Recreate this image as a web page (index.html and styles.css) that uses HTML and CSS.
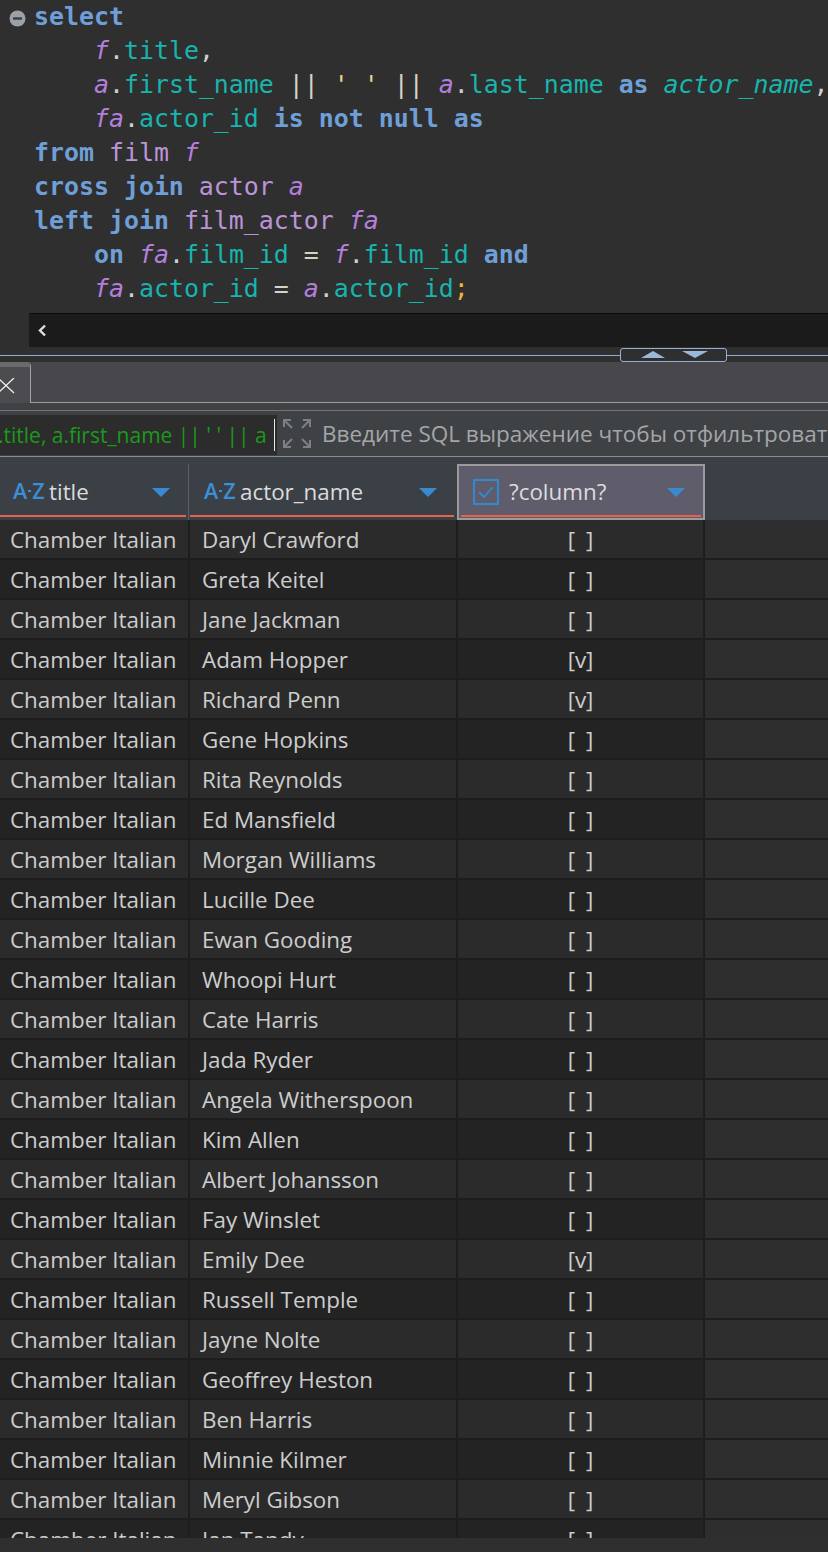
FILE: index.html
```html
<!DOCTYPE html>
<html>
<head>
<meta charset="utf-8">
<title>SQL editor</title>
<link rel="stylesheet" href="styles.css">
</head>
<body>
<div class="editor">
  <div class="code">
    <div class="ln"><span class="fold"><svg width="17" height="17" viewBox="0 0 17 17"><circle cx="8.5" cy="8.5" r="8" fill="#9ca1a8"/><rect x="4" y="7.3" width="9" height="2.4" fill="#3b3d40"/></svg></span><span class="kw">select</span></div>
    <div class="ln">    <span class="al">f</span><span class="pn">.</span><span class="col">title</span><span class="pn">,</span></div>
    <div class="ln">    <span class="al">a</span><span class="pn">.</span><span class="col">first_name</span> <span class="op">||</span> <span class="str">' '</span> <span class="op">||</span> <span class="al">a</span><span class="pn">.</span><span class="col">last_name</span> <span class="kw">as</span> <span class="col it">actor_name</span><span class="pn">,</span></div>
    <div class="ln">    <span class="al">fa</span><span class="pn">.</span><span class="col">actor_id</span> <span class="kw">is not null as</span></div>
    <div class="ln"><span class="kw">from</span> <span class="tb">film</span> <span class="al">f</span></div>
    <div class="ln"><span class="kw">cross join</span> <span class="tb">actor</span> <span class="al">a</span></div>
    <div class="ln"><span class="kw">left join</span> <span class="tb">film_actor</span> <span class="al">fa</span></div>
    <div class="ln">    <span class="kw">on</span> <span class="al">fa</span><span class="pn">.</span><span class="col">film_id</span> <span class="op">=</span> <span class="al">f</span><span class="pn">.</span><span class="col">film_id</span> <span class="kw">and</span></div>
    <div class="ln">    <span class="al">fa</span><span class="pn">.</span><span class="col">actor_id</span> <span class="op">=</span> <span class="al">a</span><span class="pn">.</span><span class="col">actor_id</span><span class="semi">;</span></div>
  </div>
  <div class="hscroll"><svg class="larr" width="11" height="13" viewBox="0 0 11 13"><polyline points="8,1.5 3,6.5 8,11.5" fill="none" stroke="#e0e0e0" stroke-width="2.4"/></svg></div>
</div>

<div class="splitter">
  <div class="split-line"></div>
  <div class="split-box">
    <svg width="26" height="8" viewBox="0 0 26 8"><polygon points="13,0 25,7 1,7" fill="#9ab8da"/></svg>
    <svg width="26" height="8" viewBox="0 0 26 8"><polygon points="0,0 26,0 13,7" fill="#9ab8da"/></svg>
  </div>
  <div class="split-line"></div>
</div>

<div class="tabs">
  <div class="tab"><svg width="18" height="16" viewBox="0 0 18 16"><path d="M-2 0 L14 15 M14 0 L-2 15" stroke="#f0f0f0" stroke-width="1.3" fill="none"/></svg></div>
  <div class="tabs-rest"></div>
</div>
<div class="tab-gap"></div>

<div class="filter">
  <div class="filter-input"><span class="filter-text">.title, a.first_name || ' ' || a</span><span class="caret"></span></div>
  <svg class="expand" width="30" height="31" viewBox="0 0 30 31">
    <g stroke="#7d7f82" stroke-width="2" fill="none">
      <path d="M2 9 V2 H9 M2 2 L10 10"/>
      <path d="M21 2 H28 V9 M28 2 L20 10"/>
      <path d="M2 22 V29 H9 M2 29 L10 21"/>
      <path d="M21 29 H28 V22 M28 29 L20 21"/>
    </g>
  </svg>
  <span class="placeholder">Введите SQL выражение чтобы отфильтровать результаты</span>
</div>

<div class="grid-head">
  <div class="hc h1"><span class="az">A<i></i>Z</span><span class="hlabel">title</span><span class="tri"></span></div>
  <div class="hc h2"><span class="az">A<i></i>Z</span><span class="hlabel">actor_name</span><span class="tri"></span></div>
  <div class="hc h3"><svg class="chk" width="26" height="26" viewBox="0 0 26 26"><rect x="1" y="1" width="24" height="24" fill="none" stroke="#2f8ad2" stroke-width="2"/><polyline points="6,13 11,18 20,8" fill="none" stroke="#2f8ad2" stroke-width="1.8"/></svg><span class="hlabel">?column?</span><span class="tri"></span></div>
</div>

<div class="grid-body">
  <div class="row"><div class="c c1">Chamber Italian</div><div class="c c2">Daryl Crawford</div><div class="c c3">[<i class="m"> </i>]</div><div class="c rest"></div></div>
  <div class="row"><div class="c c1">Chamber Italian</div><div class="c c2">Greta Keitel</div><div class="c c3">[<i class="m"> </i>]</div><div class="c rest"></div></div>
  <div class="row"><div class="c c1">Chamber Italian</div><div class="c c2">Jane Jackman</div><div class="c c3">[<i class="m"> </i>]</div><div class="c rest"></div></div>
  <div class="row"><div class="c c1">Chamber Italian</div><div class="c c2">Adam Hopper</div><div class="c c3">[<i class="m">v</i>]</div><div class="c rest"></div></div>
  <div class="row"><div class="c c1">Chamber Italian</div><div class="c c2">Richard Penn</div><div class="c c3">[<i class="m">v</i>]</div><div class="c rest"></div></div>
  <div class="row"><div class="c c1">Chamber Italian</div><div class="c c2">Gene Hopkins</div><div class="c c3">[<i class="m"> </i>]</div><div class="c rest"></div></div>
  <div class="row"><div class="c c1">Chamber Italian</div><div class="c c2">Rita Reynolds</div><div class="c c3">[<i class="m"> </i>]</div><div class="c rest"></div></div>
  <div class="row"><div class="c c1">Chamber Italian</div><div class="c c2">Ed Mansfield</div><div class="c c3">[<i class="m"> </i>]</div><div class="c rest"></div></div>
  <div class="row"><div class="c c1">Chamber Italian</div><div class="c c2">Morgan Williams</div><div class="c c3">[<i class="m"> </i>]</div><div class="c rest"></div></div>
  <div class="row"><div class="c c1">Chamber Italian</div><div class="c c2">Lucille Dee</div><div class="c c3">[<i class="m"> </i>]</div><div class="c rest"></div></div>
  <div class="row"><div class="c c1">Chamber Italian</div><div class="c c2">Ewan Gooding</div><div class="c c3">[<i class="m"> </i>]</div><div class="c rest"></div></div>
  <div class="row"><div class="c c1">Chamber Italian</div><div class="c c2">Whoopi Hurt</div><div class="c c3">[<i class="m"> </i>]</div><div class="c rest"></div></div>
  <div class="row"><div class="c c1">Chamber Italian</div><div class="c c2">Cate Harris</div><div class="c c3">[<i class="m"> </i>]</div><div class="c rest"></div></div>
  <div class="row"><div class="c c1">Chamber Italian</div><div class="c c2">Jada Ryder</div><div class="c c3">[<i class="m"> </i>]</div><div class="c rest"></div></div>
  <div class="row"><div class="c c1">Chamber Italian</div><div class="c c2">Angela Witherspoon</div><div class="c c3">[<i class="m"> </i>]</div><div class="c rest"></div></div>
  <div class="row"><div class="c c1">Chamber Italian</div><div class="c c2">Kim Allen</div><div class="c c3">[<i class="m"> </i>]</div><div class="c rest"></div></div>
  <div class="row"><div class="c c1">Chamber Italian</div><div class="c c2">Albert Johansson</div><div class="c c3">[<i class="m"> </i>]</div><div class="c rest"></div></div>
  <div class="row"><div class="c c1">Chamber Italian</div><div class="c c2">Fay Winslet</div><div class="c c3">[<i class="m"> </i>]</div><div class="c rest"></div></div>
  <div class="row"><div class="c c1">Chamber Italian</div><div class="c c2">Emily Dee</div><div class="c c3">[<i class="m">v</i>]</div><div class="c rest"></div></div>
  <div class="row"><div class="c c1">Chamber Italian</div><div class="c c2">Russell Temple</div><div class="c c3">[<i class="m"> </i>]</div><div class="c rest"></div></div>
  <div class="row"><div class="c c1">Chamber Italian</div><div class="c c2">Jayne Nolte</div><div class="c c3">[<i class="m"> </i>]</div><div class="c rest"></div></div>
  <div class="row"><div class="c c1">Chamber Italian</div><div class="c c2">Geoffrey Heston</div><div class="c c3">[<i class="m"> </i>]</div><div class="c rest"></div></div>
  <div class="row"><div class="c c1">Chamber Italian</div><div class="c c2">Ben Harris</div><div class="c c3">[<i class="m"> </i>]</div><div class="c rest"></div></div>
  <div class="row"><div class="c c1">Chamber Italian</div><div class="c c2">Minnie Kilmer</div><div class="c c3">[<i class="m"> </i>]</div><div class="c rest"></div></div>
  <div class="row"><div class="c c1">Chamber Italian</div><div class="c c2">Meryl Gibson</div><div class="c c3">[<i class="m"> </i>]</div><div class="c rest"></div></div>
  <div class="row"><div class="c c1">Chamber Italian</div><div class="c c2">Ian Tandy</div><div class="c c3">[<i class="m"> </i>]</div><div class="c rest"></div></div>
</div>
<div class="bottom"></div>
</body>
</html>
```

FILE: styles.css
```css
html, body {
  margin: 0;
  padding: 0;
}
body {
  width: 828px;
  height: 1552px;
  overflow: hidden;
  background: #2f2f2f;
  font-family: "Open Sans", "Noto Sans", sans-serif;
}

/* ---------- editor ---------- */
.editor {
  background: #2f2f2f;
}
.code {
  height: 313px;
  font-family: "DejaVu Sans Mono", monospace;
  font-size: 24.9px;
  line-height: 34px;
  color: #cfcfcf;
}
.ln {
  white-space: pre;
  padding-left: 34px;
  height: 34px;
}
.fold {
  display: inline-block;
  width: 17px;
  height: 17px;
  margin-left: -25px;
  margin-right: 8px;
  vertical-align: -2px;
}
.fold svg { display: block; }
.kw { color: #6f9fd8; font-weight: bold; }
.tb { color: #bb94d8; }
.al { color: #b47fdc; font-style: italic; }
.col { color: #18b4ae; }
.it { font-style: italic; }
.op { color: #d6d2c8; }
.str { color: #e8d48e; }
.pn { color: #cfcfcf; }
.semi { color: #e8b63c; }

.hscroll {
  margin-left: 29px;
  height: 33px;
  background: #1b1b1b;
  border-top: 1px solid #0c0c0c;
  display: flex;
  align-items: center;
}
.larr {
  margin-left: 8px;
  display: block;
}

/* ---------- splitter ---------- */
.splitter {
  height: 15px;
  display: flex;
  align-items: center;
  background: #2f2f2f;
}
.split-line {
  flex: 1;
  height: 1px;
  background: #93b0d2;
  margin-top: 1px;
}
.split-line:first-child {
  flex: 0 0 620px;
}
.split-box {
  width: 105px;
  height: 12px;
  border: 1px solid #93b0d2;
  border-radius: 3px;
  display: flex;
  align-items: center;
  justify-content: center;
  gap: 16px;
}
.split-box svg { display: block; }

/* ---------- tabs ---------- */
.tabs {
  height: 41px;
  background: #48484c;
  display: flex;
  align-items: flex-end;
}
.tab {
  width: 31px;
  height: 41px;
  flex-shrink: 0;
  background: #4b4b50;
  border-top: 5px solid #6a6a6c;
  border-right: 1px solid #a4a4a4;
  border-top-right-radius: 4px;
  padding-top: 11px;
  box-sizing: border-box;
}
.tab svg { display: block; }
.tabs-rest {
  flex: 1;
  height: 1px;
  background: #9c9c9c;
}
.tab-gap {
  height: 7px;
  background: #3f4245;
}

/* ---------- filter ---------- */
.filter {
  height: 45px;
  background: #3f4245;
  border-top: 1px solid #727477;
  border-bottom: 1px solid #8a8c8e;
  display: flex;
  align-items: center;
  overflow: hidden;
}
.filter-input {
  flex: 0 0 277px;
  width: 277px;
  height: 40px;
  margin-top: 2px;
  background: #2c2c2c;
  display: flex;
  align-items: center;
  overflow: hidden;
  white-space: pre;
}
.filter-text {
  color: #1a9a1a;
  font-size: 21px;
  margin-left: -2px;
  flex-shrink: 0;
}
.caret {
  flex-shrink: 0;
  width: 1px;
  height: 32px;
  background: #e8e8e8;
  margin-left: 7px;
}
.expand {
  flex-shrink: 0;
  display: block;
  margin-left: 5px;
  margin-right: 10px;
}
.placeholder {
  flex-shrink: 0;
  color: #a4a6a8;
  font-size: 22.5px;
  white-space: nowrap;
}

/* ---------- grid header ---------- */
.grid-head {
  height: 56px;
  padding-top: 7px;
  background: #3b4046;
  display: flex;
}
.hc {
  position: relative;
  display: flex;
  align-items: center;
  box-sizing: border-box;
  color: #dcdcdc;
  font-size: 22.4px;
}
.hc::after {
  content: "";
  position: absolute;
  left: 0;
  right: 0;
  bottom: 3px;
  height: 2px;
  background: #ec5f48;
}
.h1 {
  width: 189px;
  padding-left: 13px;
  padding-right: 18px;
  border-right: 1px solid #5b6066;
}
.h1::after { right: 2px; }
.h2 {
  width: 268px;
  padding-left: 15px;
  padding-right: 20px;
}
.h2::after { left: 1px; right: 3px; }
.h3 {
  width: 248px;
  padding-left: 14px;
  padding-right: 18px;
  background: #5f5d6b;
  border: 2px solid #9a9a9c;
}
.h3::after { left: 2px; right: 2px; bottom: 1px; }
.az {
  flex: 0 0 36px;
  display: flex;
  align-items: center;
  color: #3a8fd6;
  font-size: 21.5px;
  font-weight: 600;
  width: 36px;
  margin-top: -3px;
}
.az i {
  display: block;
  width: 3px;
  height: 2px;
  background: #3a8fd6;
  margin: 0 1px;
}
.chk {
  display: block;
  width: 26px;
  margin-right: 10px;
}
.hlabel {
  flex: 1;
  margin-top: -2px;
}
.tri {
  width: 0;
  height: 0;
  border-left: 9px solid transparent;
  border-right: 9px solid transparent;
  border-top: 9px solid #3a8ad2;
}

/* ---------- grid body ---------- */
.grid-body {
  height: 1018px;
  overflow: hidden;
  background: #2e2e2e;
}
.row {
  display: flex;
  height: 40px;
  box-sizing: border-box;
  border-bottom: 2px solid #1d1d1d;
  color: #cdcdcd;
  font-size: 22.4px;
}
.c {
  box-sizing: border-box;
  display: flex;
  align-items: center;
  white-space: nowrap;
  overflow: hidden;
}
.row:nth-child(odd) .c1,
.row:nth-child(odd) .c2,
.row:nth-child(odd) .c3 { background: #2b2b2b; }
.row:nth-child(even) .c1,
.row:nth-child(even) .c2,
.row:nth-child(even) .c3 { background: #232323; }
.c1 {
  width: 190px;
  padding-left: 10px;
  border-right: 2px solid #1d1d1d;
}
.c2 {
  width: 268px;
  padding-left: 12px;
  border-right: 2px solid #1d1d1d;
}
.c3 {
  width: 247px;
  justify-content: center;
  border-right: 2px solid #1d1d1d;
}
.m {
  font-style: normal;
  display: inline-block;
  width: 11px;
  text-align: center;
}
.rest {
  flex: 1;
  background: #2e2e2e;
}
.bottom {
  height: 13px;
  background: #2f2f2f;
}
```
